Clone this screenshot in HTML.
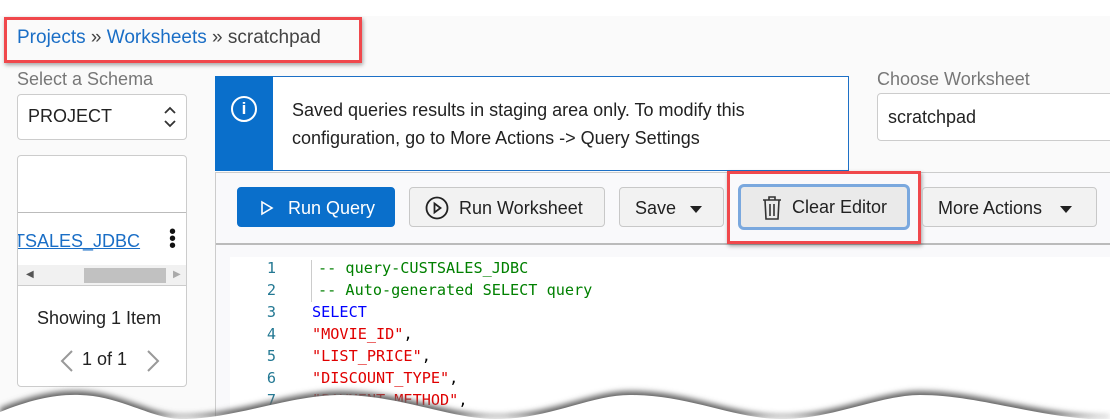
<!DOCTYPE html>
<html style="margin:0;width:1110px;height:419px;overflow:hidden"><head><style>
body{margin:0;width:1110px;height:419px;overflow:hidden;background:#fafafa;font-family:"Liberation Sans",sans-serif;position:relative}
.a{position:absolute}
.btn{position:absolute;top:187px;height:40px;border:1px solid #c8c8c8;border-radius:4px;background:#f2f2f2;font-size:18px;color:#222;line-height:40px;box-sizing:border-box}
.code{font-family:"DejaVu Sans Mono","Liberation Mono",monospace;font-size:15.2px}
.ln{position:absolute;left:240px;width:36px;text-align:right;color:#237893}
.cd{position:absolute;left:312px}
.tri{display:inline-block;width:0;height:0;border-left:6px solid transparent;border-right:6px solid transparent;border-top:7px solid #222;vertical-align:middle;margin-left:8px}
</style></head><body>
<div class="a" style="left:0;top:0;width:1110px;height:16px;background:#fff"></div>
<div class="a" style="left:4px;top:17px;width:352px;height:40px;border:3px solid #f0484c;box-shadow:1px 2px 4px rgba(0,0,0,.35)"></div>
<div class="a" style="left:17px;top:27px;font-size:19px;color:#1a6ec6">Projects <span style="color:#444">»</span> Worksheets <span style="color:#444">» scratchpad</span></div>
<div class="a" style="left:17px;top:69px;font-size:18px;color:#777">Select a Schema</div>
<div class="a" style="left:17px;top:94px;width:170px;height:46px;border:1px solid #ccc;border-radius:4px;background:#fff;box-sizing:border-box"></div>
<div class="a" style="left:28px;top:106px;font-size:18px;color:#222">PROJECT</div>
<svg class="a" style="left:163px;top:106px" width="14" height="22" viewBox="0 0 14 22" fill="none" stroke="#333" stroke-width="1.8"><path d="M2 7l5-5 5 5M2 15l5 5 5-5"/></svg>
<div class="a" style="left:17px;top:155px;width:170px;height:232px;border:1px solid #ccc;border-radius:4px;background:#fff;box-sizing:border-box;overflow:hidden">
<div class="a" style="left:0;top:56px;width:170px;height:1px;background:#bbb"></div>
<div class="a" style="left:-16px;top:75px;font-size:18px;color:#1a6ec6;text-decoration:underline">STSALES_JDBC</div>
<div class="a" style="left:151px;top:73px;width:5px;font-size:20px;line-height:7px;color:#111">•<br>•<br>•</div>
<div class="a" style="left:0;top:109px;width:169px;height:20px;background:#f1f1f1;border-bottom:1px solid #ccc"></div>
<div class="a" style="left:66px;top:112px;width:82px;height:15px;background:#c1c1c1"></div>
<div class="a" style="left:8px;top:113px;font-size:10px;color:#555">◀</div>
<div class="a" style="left:155px;top:113px;font-size:10px;color:#aaa">▶</div>
<div class="a" style="left:19px;top:152px;font-size:18px;color:#222">Showing 1 Item</div>
<svg class="a" style="left:42px;top:193px" width="14" height="24" viewBox="0 0 14 24" fill="none" stroke="#999" stroke-width="2"><path d="M12 2L2 12l10 10"/></svg>
<div class="a" style="left:64px;top:193px;font-size:18px;color:#222">1 of 1</div>
<svg class="a" style="left:128px;top:193px" width="14" height="24" viewBox="0 0 14 24" fill="none" stroke="#999" stroke-width="2"><path d="M2 2l10 10L2 22"/></svg>
</div>
<div class="a" style="left:215px;top:76px;width:634px;height:95px;border:1px solid #1d70c6;background:#fff;box-sizing:border-box"></div>
<div class="a" style="left:215px;top:76px;width:58px;height:95px;background:#0a6fcb"></div>
<div class="a" style="left:231px;top:96px;width:22px;height:22px;border:2px solid #fff;border-radius:50%;color:#fff;text-align:center;font-size:17px;line-height:22px;font-weight:bold">i</div>
<div class="a" style="left:292px;top:96px;font-size:18px;color:#222;line-height:28px">Saved queries results in staging area only. To modify this<br>configuration, go to More Actions -&gt; Query Settings</div>
<div class="a" style="left:877px;top:69px;font-size:18px;color:#777">Choose Worksheet</div>
<div class="a" style="left:877px;top:93px;width:240px;height:48px;border:1px solid #ccc;border-radius:4px;background:#fff;box-sizing:border-box"></div>
<div class="a" style="left:888px;top:107px;font-size:18px;color:#222">scratchpad</div>
<div class="a" style="left:215px;top:172px;width:895px;height:247px;border-left:1px solid #ccc;border-top:1px solid #ccc;background:#f9f9fb"></div>
<div class="a" style="left:216px;top:243px;width:894px;height:2px;background:#bbb"></div>
<div class="a" style="left:230px;top:257px;width:880px;height:162px;background:#fff"></div>
<div class="btn" style="left:237px;width:158px;background:#0a6fcb;border-color:#0a6fcb;color:#fff"><svg style="position:absolute;left:22px;top:12px" width="14" height="16" viewBox="0 0 14 16" fill="none" stroke="#fff" stroke-width="1.6"><path d="M2 2l10 6-10 6z"/></svg><span style="position:absolute;left:50px">Run Query</span></div>
<div class="btn" style="left:409px;width:196px"><svg style="position:absolute;left:15px;top:8px" width="24" height="24" viewBox="0 0 24 24" fill="none" stroke="#222" stroke-width="1.8"><circle cx="12" cy="12" r="10.5"/><path d="M9.5 7.5l6 4.5-6 4.5z"/></svg><span style="position:absolute;left:49px">Run Worksheet</span></div>
<div class="btn" style="left:619px;width:105px"><span style="position:absolute;left:15px">Save<span class="tri" style="margin-left:14px"></span></span></div>
<div class="a" style="left:727px;top:171px;width:188px;height:67px;border:3px solid #f0484c;box-shadow:1px 2px 4px rgba(0,0,0,.35)"></div>
<div class="btn" style="left:738px;top:184px;width:172px;height:46px;border:3px solid #7aa8de;border-radius:6px;background:#eaeaea;line-height:40px"><svg style="position:absolute;left:20px;top:8px" width="22" height="26" viewBox="0 0 22 26" fill="none" stroke="#333" stroke-width="1.6"><path d="M2 5h18M8 5V2h6v3M4 5l1 19h12l1-19M9 9v12M13 9v12"/></svg><span style="position:absolute;left:51px">Clear Editor</span></div>
<div class="btn" style="left:922px;width:175px"><span style="position:absolute;left:15px">More Actions<span class="tri" style="margin-left:18px"></span></span></div>
<div class="a" style="left:311px;top:260px;width:1px;height:42px;background:#ccc"></div>
<div class="code">
<div class="ln" style="top:259px">1</div><div class="cd" style="top:259px;left:318px;color:#008000">-- query-CUSTSALES_JDBC</div>
<div class="ln" style="top:281px">2</div><div class="cd" style="top:281px;left:318px;color:#008000">-- Auto-generated SELECT query</div>
<div class="ln" style="top:303px">3</div><div class="cd" style="top:303px;color:#0000ff">SELECT</div>
<div class="ln" style="top:325px">4</div><div class="cd" style="top:325px;color:#e00000">"MOVIE_ID"<span style="color:#000">,</span></div>
<div class="ln" style="top:347px">5</div><div class="cd" style="top:347px;color:#e00000">"LIST_PRICE"<span style="color:#000">,</span></div>
<div class="ln" style="top:369px">6</div><div class="cd" style="top:369px;color:#e00000">"DISCOUNT_TYPE"<span style="color:#000">,</span></div>
<div class="ln" style="top:391px">7</div><div class="cd" style="top:391px;color:#e00000">"PAYMENT_METHOD"<span style="color:#000">,</span></div>
</div>
<svg class="a" style="left:0;top:380px" width="1110" height="39" viewBox="0 0 1110 39">
<defs><filter id="s" x="-5%" y="-50%" width="110%" height="200%"><feGaussianBlur stdDeviation="3"/></filter></defs>
<path d="M0 30 C30 18 55 12 80 13 C120 14 150 36 180 37 C230 38 290 13 340 13 C400 13 450 37 496 37 C550 37 590 13 630 13 C690 13 730 36 780 37 C830 38 880 13 920 13 C980 13 1040 37 1110 38 L1110 39 L0 39Z" fill="#666" filter="url(#s)" transform="translate(0,-2)"/>
<path d="M0 32 C30 20 55 14 80 15 C120 16 150 38 180 39 C230 40 290 15 340 15 C400 15 450 39 496 39 C550 39 590 15 630 15 C690 15 730 38 780 39 C830 40 880 15 920 15 C980 15 1040 39 1110 40 L1110 45 L0 45Z" fill="#fff"/>
</svg>
</body></html>
